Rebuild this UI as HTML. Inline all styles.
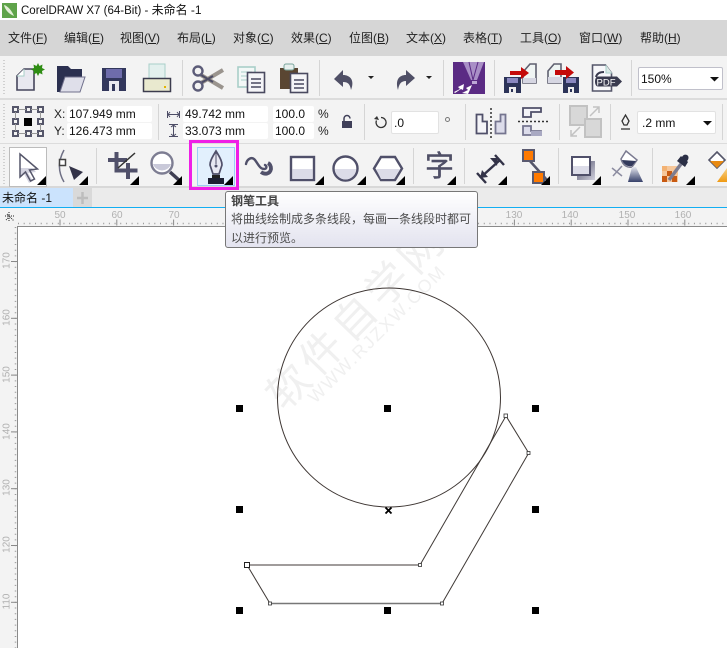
<!DOCTYPE html>
<html lang="zh"><head><meta charset="utf-8"><title>CorelDRAW X7</title>
<style>
html,body{margin:0;padding:0;background:#fff}
#p{position:relative;width:727px;height:648px;overflow:hidden;background:#fff;font-family:"Liberation Sans","Noto Sans CJK SC",sans-serif;font-size:12px;color:#111}
#p div,#p span.a{position:absolute;white-space:nowrap}
.m{top:30px;line-height:16px;font-size:12px;color:#222}
.m u{text-underline-offset:1px}
.b{background:#fff;border-radius:2px;height:16px;line-height:16px;color:#111;font-size:12px;padding-left:2px;box-sizing:border-box}
.l{font-size:12px;line-height:16px;color:#222}
.rh{top:210px;font-size:10px;line-height:11px;color:#b0b0b0;width:24px;text-align:center}
.rv{left:-5px;font-size:10px;line-height:11px;color:#b0b0b0;width:24px;text-align:center;transform:rotate(-90deg)}
svg{position:absolute;left:0;top:0}
</style></head><body><div id="p">

<div style="left:0;top:20px;width:727px;height:36px;background:#d6d6d6"></div>
<div style="left:0;top:56px;width:727px;height:132px;background:#f3f3f3"></div>
<div style="left:0;top:98px;width:727px;height:2px;background:#dcdcdc"></div>
<div style="left:0;top:143px;width:727px;height:1px;background:#dcdcdc"></div>
<div style="left:0;top:186px;width:727px;height:2px;background:#d8d8d8"></div>
<div style="left:0;top:188px;width:727px;height:19px;background:#ebebeb"></div>
<div style="left:0;top:188px;width:73px;height:19px;background:#cbe3fd"></div>
<div style="left:73px;top:188px;width:19px;height:19px;background:#d9d9d9"></div>
<div style="left:0;top:207px;width:727px;height:1px;background:#12aef2"></div>
<div style="left:0;top:208px;width:727px;height:18px;background:#f3f3f3"></div>
<div style="left:0;top:208px;width:17px;height:440px;background:#f3f3f3"></div>
<div style="left:17px;top:226px;width:710px;height:1px;background:#8a8a8a"></div>
<div style="left:17px;top:226px;width:1px;height:422px;background:#8a8a8a"></div>

<!-- combos / input boxes -->
<div class="b" style="left:638px;top:67px;width:85px;height:23px;line-height:23px;border:1px solid #c0c0ca;padding-left:2px">150%</div>
<div class="b" style="left:67px;top:106px;width:85px">107.949 mm</div>
<div class="b" style="left:67px;top:123px;width:85px">126.473 mm</div>
<div class="b" style="left:183px;top:106px;width:85px">49.742 mm</div>
<div class="b" style="left:183px;top:123px;width:85px">33.073 mm</div>
<div class="b" style="left:273px;top:106px;width:41px">100.0</div>
<div class="b" style="left:273px;top:123px;width:41px">100.0</div>
<div class="b" style="left:391px;top:111px;width:48px;height:23px;line-height:23px;border:1px solid #e2e2e2">.0</div>
<div class="b" style="left:637px;top:111px;width:79px;height:23px;line-height:23px;border:1px solid #e2e2e2;padding-left:4px">.2 mm</div>

<!-- canvas art -->
<div style="left:207px;top:292px;font-size:42px;line-height:50px;letter-spacing:5.500px;color:#f0f0f0;width:300px;text-align:center;transform:rotate(-46deg)">软件自学网</div>
<div style="left:227px;top:323px;font-size:18px;line-height:22px;letter-spacing:1.800px;color:#f0f0f0;width:300px;text-align:center;transform:rotate(-45deg)">WWW.RJZXW.COM</div>

<svg width="727" height="648" viewBox="0 0 727 648">
<!-- ruler ticks -->
<line x1="18" y1="223.500" x2="727" y2="223.500" stroke="#9a9a9a" stroke-width="1.500" stroke-dasharray="1 4.680"/>
<line x1="15.500" y1="227" x2="15.500" y2="648" stroke="#9a9a9a" stroke-width="1.500" stroke-dasharray="1 4.680"/>
<line x1="59.500" y1="222.500" x2="727" y2="222.500" stroke="#8a8a8a" stroke-width="6" stroke-dasharray="1 55.800" />
<line x1="11" y1="261.500" x2="17" y2="261.500" stroke="#888"/><line x1="11" y1="318.300" x2="17" y2="318.300" stroke="#888"/><line x1="11" y1="375.100" x2="17" y2="375.100" stroke="#888"/><line x1="11" y1="431.900" x2="17" y2="431.900" stroke="#888"/><line x1="11" y1="488.700" x2="17" y2="488.700" stroke="#888"/><line x1="11" y1="545.500" x2="17" y2="545.500" stroke="#888"/><line x1="11" y1="602.300" x2="17" y2="602.300" stroke="#888"/>
<path d="M5 216h9M9 212v10M7 214l7 7M6 220l3-3" stroke="#222" stroke-width="1" stroke-dasharray="1 1" fill="none"/>
<rect x="0" y="207" width="727" height="1" fill="#12aef2"/>

<!-- drawing -->
<ellipse cx="389" cy="397.500" rx="111.500" ry="109.500" fill="none" stroke="#3e3633" stroke-width="1"/>
<path d="M247 565H420L506 416L528.700 453L442 603.500H270Z" fill="none" stroke="#403a37" stroke-width="1"/>
<path d="M270 603.500H442" stroke="#777" stroke-width="1.500"/>
<rect x="244.500" y="562.500" width="5" height="5" fill="#fff" stroke="#222"/>
<g fill="#fff" stroke="#333" stroke-width=".8"><rect x="418.500" y="563.500" width="3" height="3"/><rect x="268.500" y="602" width="3" height="3"/><rect x="440.500" y="602" width="3" height="3"/><rect x="527" y="451.500" width="3" height="3"/><rect x="504" y="414" width="3.500" height="3.500"/></g>
<g fill="#000"><rect x="236" y="405" width="7" height="7"/><rect x="384" y="405" width="7" height="7"/><rect x="532" y="405" width="7" height="7"/><rect x="236" y="506" width="7" height="7"/><rect x="532" y="506" width="7" height="7"/><rect x="236" y="607" width="7" height="7"/><rect x="384" y="607" width="7" height="7"/><rect x="532" y="607" width="7" height="7"/></g>
<path d="M385.500 507.500l6 6M391.500 507.500l-6 6" stroke="#000" stroke-width="1.800"/>

<!-- app logo -->
<rect x="2" y="3" width="15" height="15" fill="#5fa34a"/><path d="M4 5c4 1 8 6 10 11c-5-2-9-6-10-11z" fill="#e4efd8"/>

<!-- drag handles -->
<g stroke="#c4c4c4" stroke-dasharray="1 2" stroke-width="1.500"><line x1="4" y1="60" x2="4" y2="95"/><line x1="4" y1="104" x2="4" y2="140"/><line x1="4" y1="147" x2="4" y2="184"/></g>
<!-- separators -->
<g stroke="#d5d5d5"><path d="M182.500 60v36M319.500 60v36M443.500 60v36M494.500 60v36M631.500 60v36M158.500 104v36M364.500 104v36M465.500 104v36M559.500 104v36M610.500 104v36M722.500 104v36M96.500 148v36M413.500 148v36M464.500 148v36M558.500 148v36M652.500 148v36"/></g>

<!-- new -->
<path d="M17 76l7-7h10v21H17z" fill="#e8e8f0" stroke="#46465c" stroke-width="1.600"/><path d="M17 76h7v-7" fill="#fff" stroke="#a9cfc9"/>
<path d="M38 63l1.500 3 3-1.500-.5 3.500 3 1.500-3 1.500.5 3.500-3-1.500-1.500 3-1.500-3-3 1.500.5-3.500-3-1.500 3-1.500-.5-3.500 3 1.500z" fill="#2f8d14"/>
<!-- open -->
<path d="M57 92V66h11l3 3h11v8H65l-5 15z" fill="#2b3050"/><path d="M60 92l5-15h20l-5 15z" fill="#dfdfea" stroke="#70708c"/>
<!-- save -->
<rect x="102" y="68" width="24" height="23" fill="#32375c"/><rect x="106" y="69" width="16" height="9" fill="#6e6cab"/><rect x="109" y="81" width="10" height="10" fill="#e8e8f0"/><rect x="112" y="84" width="3" height="7" fill="#32375c"/>
<!-- print -->
<rect x="149" y="64" width="16" height="18" fill="#e3f0ee" stroke="#a9cfc9"/><rect x="143.500" y="78.500" width="27" height="13" fill="#e9e9cf" stroke="#3c3c4e" stroke-width="1.500"/><rect x="164" y="86" width="2" height="2" fill="#e4b400"/>
<!-- scissors -->
<path d="M201 75l22 13M201 83l22-13" stroke="#9a948e" stroke-width="4"/><path d="M201 75l12 7M201 83l12-7" stroke="#4d4d66" stroke-width="2"/><circle cx="198" cy="71" r="4.500" fill="none" stroke="#5c5c78" stroke-width="2.400"/><circle cx="198" cy="86" r="4.500" fill="none" stroke="#5c5c78" stroke-width="2.400"/>
<!-- copy -->
<rect x="238" y="67" width="17" height="20" fill="#f3f8f7" stroke="#a9cfc9" stroke-width="1.600"/><path d="M241 72h11M241 76h6M241 80h6" stroke="#a9cfc9"/><rect x="247.500" y="72.500" width="17" height="20" fill="#f5f5f8" stroke="#4a4a60" stroke-width="1.600"/><path d="M251 79h10M251 83h10M251 87h10" stroke="#4a4a60" stroke-width="1.400"/>
<!-- paste -->
<rect x="280" y="68" width="18" height="21" fill="#5a4632"/><rect x="284" y="64" width="10" height="6" rx="2" fill="#e8f0ee" stroke="#7aa59c"/><rect x="290.500" y="73.500" width="17" height="19" fill="#f5f5f8" stroke="#4a4a60" stroke-width="1.600"/><path d="M294 80h10M294 84h10M294 88h10" stroke="#4a4a60" stroke-width="1.400"/>
<!-- undo/redo -->
<path d="M343 70l-9 9 9 8v-5c5 0 7 2 8 8 4-10-1-15-8-15z" fill="#4f4f66"/>
<path d="M406 70l9 8-9 8v-5c-5 0-7 3-8 9-3-10 1-15 8-15z" fill="#4f4f66"/>
<path d="M368 76h6l-3 3zM426 76h6l-3 3z" fill="#222"/>
<!-- connect -->
<rect x="453" y="62" width="32" height="32" fill="#5b2b84"/><path d="M463 62h21l-7 18h-6z" fill="#a98fc6"/><path d="M469 62l4 18M478 62l-5 18" stroke="#5b2b84"/><rect x="472" y="81" width="5" height="3" fill="#bda7d6"/><path d="M454 92l6-3-2-2 6-3-1 6-2-1-6 4zM472 85l-6 3 2 2-6 3 6 1 1-2z" fill="#fff"/>
<!-- import -->
<path d="M523 72l7-8h6v19h-13z" fill="#f0f5f4" stroke="#5f6070" stroke-width="1.600"/><path d="M523 78h13v5h-13z" fill="#d6d6e2"/><rect x="504" y="77" width="17" height="16" fill="#2c3358"/><rect x="507" y="78" width="11" height="5" fill="#8a88c0"/><rect x="509" y="87" width="7" height="6" fill="#eee"/><rect x="511" y="89" width="2" height="3" fill="#2c3358"/><path d="M510 71h11v-4l8 6-8 6v-4h-11z" fill="#c40a0a"/>
<!-- export -->
<path d="M548 71l6-7h7v19h-13z" fill="#eef4f3" stroke="#5f6070" stroke-width="1.600"/><path d="M548 77h14v6h-14z" fill="#d6d6e2"/><rect x="563" y="77" width="16" height="16" fill="#2c3358"/><rect x="566" y="78" width="10" height="5" fill="#8a88c0"/><rect x="568" y="87" width="6" height="6" fill="#eee"/><rect x="570" y="89" width="2" height="3" fill="#2c3358"/><path d="M555 70h11v-4l8 6.500-8 6.500v-4h-11z" fill="#c40a0a"/>
<!-- pdf -->
<path d="M592.500 65h13l6 8v18h-19z" fill="#f7f7fa" stroke="#55566a" stroke-width="1.600"/><path d="M606 65v8h6" fill="#dbe9e6" stroke="#a9cfc9"/><path d="M598 76.500h19l5 5-5 5h-19c-4 0-4-10 0-10z" fill="#3a3b4f"/><path d="M596 77c1-4 4-5 8-5" fill="none" stroke="#3a3b4f" stroke-width="2"/>
<text x="596.500" y="85.500" font-family="Liberation Sans" font-size="9.500" fill="#fff">PDF</text>
<path d="M710 77h9l-4.500 4.500z" fill="#111"/>

<!-- property bar -->
<g fill="none" stroke="#55566a" stroke-width="2"><rect x="13" y="107" width="5" height="5"/><rect x="26" y="107" width="5" height="5"/><rect x="38" y="107" width="5" height="5"/><rect x="13" y="119" width="5" height="5"/><rect x="38" y="119" width="5" height="5"/><rect x="13" y="131" width="5" height="5"/><rect x="26" y="131" width="5" height="5"/><rect x="38" y="131" width="5" height="5"/></g><rect x="24" y="118" width="8" height="8" fill="#000"/>
<path d="M18 109.500h8M31 109.500h7M15.500 112v7M40.500 112v7M15.500 124v7M40.500 124v7M18 133.500h8M31 133.500h7" stroke="#999"/>
<path d="M168 114.500h11M170 112l-2 2.500 2 2.500M177 112l2 2.500-2 2.500M167.500 111v7M179.500 111v7" stroke="#4d4d66" fill="none"/>
<path d="M173.500 125v11M171 127l2.500-2 2.500 2M171 134l2.500 2 2.500-2M169 124.500h9M169 136.500h9" stroke="#4d4d66" fill="none"/>
<rect x="342" y="121" width="10" height="7" fill="#3f3f58"/><path d="M344 121v-2.500a3 3 0 0 1 6 0" stroke="#3f3f58" stroke-width="1.500" fill="none"/>
<path d="M381 117.500a5 5 0 1 1-4.500 3" stroke="#333" stroke-width="1.300" fill="none"/><path d="M374 119l3-3 2 4z" fill="#333"/>
<circle cx="447.500" cy="119.500" r="2" fill="none" stroke="#777"/>
<!-- mirror h -->
<path d="M476.500 114.500h6v7h4.500v12h-10.500z" fill="#f4f4f8" stroke="#50506a" stroke-width="1.800"/><path d="M505.500 114.500h-5v7h-5v12h10z" fill="#dcdcea" stroke="#75758f" stroke-width="1.800"/><line x1="491" y1="108" x2="491" y2="138" stroke="#333" stroke-dasharray="2 2" stroke-width="1.500"/>
<!-- mirror v -->
<path d="M523 108h18v4h-10v5h-8z" fill="#f4f4f8" stroke="#50506a" stroke-width="1.800"/><path d="M523 126h8v5h10v4h-18z" fill="#dcdcea" stroke="#75758f" stroke-width="1.800"/><rect x="531" y="131" width="11" height="5" fill="#a9a9c2"/><line x1="518" y1="121.500" x2="548" y2="121.500" stroke="#333" stroke-dasharray="2 2" stroke-width="1.500"/>
<!-- grey transform -->
<rect x="570" y="106" width="17" height="19" fill="#d8d8d8" stroke="#c2c2c2" stroke-width="2"/><rect x="585" y="119" width="16" height="18" fill="#d8d8d8" stroke="#c2c2c2" stroke-width="2"/><path d="M590 116l9-9M593 107h6v6M571 136l9-9M571 130v6h6" stroke="#c2c2c2" stroke-width="1.500" fill="none"/>
<path d="M624 125l-2-4 3.500-6 3.500 6-2 4zM621 129h9" stroke="#333" fill="none" stroke-width="1.300"/>
<path d="M703 121h9l-4.500 4.500z" fill="#111"/>

<!-- toolbox -->
<rect x="9.500" y="147.500" width="37" height="39" fill="#fff" stroke="#bcbcbc"/>
<path d="M20 168h12l4 4-8 1 5 8-4 2-5-9-4 4z" fill="#d4d4e0"/>
<path d="M20 154v23l5.500-5 5 9 4-2-5-9 8-1z" fill="none" stroke="#55566a" stroke-width="1.500"/>
<path d="M64 150c-6 11-6 22 0 32" fill="none" stroke="#6f7085" stroke-width="1.500"/><rect x="59.500" y="159.500" width="6" height="6" fill="#fff" stroke="#444" stroke-width="1.500"/><path d="M69 166l14 6-9 8z" fill="#333348"/>
<!-- crop -->
<path d="M108 160h19v0" stroke="#50506a" stroke-width="4" fill="none"/><path d="M116.500 152v18.500h21M128 163v16" stroke="#50506a" stroke-width="4" fill="none"/><path d="M118 168l17-15" stroke="#333" stroke-width="1.500"/>
<!-- zoom -->
<circle cx="162" cy="163" r="10.500" fill="#fff" stroke="#7d7d92" stroke-width="2.400"/><path d="M153 164h18a9.500 9.500 0 0 1-18 0z" fill="#c9c9d9"/><path d="M170 172l10 9" stroke="#3e3e52" stroke-width="3.500"/>
<!-- pen tool highlight -->
<rect x="190.500" y="141.500" width="47" height="47" fill="none" stroke="#ef1fe6" stroke-width="3"/>
<rect x="197.500" y="147.500" width="37" height="38" fill="#e2f0fd" stroke="#9ccdf7"/>
<path d="M216 151c5 8 6 11 6 14l-3 9h-6l-3-9c0-3 1-6 6-14z" fill="#e8e8f2" stroke="#50506a" stroke-width="1.700"/><path d="M216 152v12" stroke="#50506a"/><circle cx="216" cy="166" r="1.500" fill="#50506a"/><rect x="212" y="175" width="8" height="3" fill="#222"/><rect x="208" y="178" width="16" height="6" fill="#1d2033"/>
<!-- artistic curve -->
<path d="M246 164c1-5 6-8 9-4s5 9 9 9c3 0 3-3 1-4" fill="none" stroke="#50506a" stroke-width="2.400" stroke-linecap="round"/><path d="M261 172c4 3 9 2 10-3c0-3-1-5-3-6" fill="none" stroke="#50506a" stroke-width="3.800"/>
<!-- rect -->
<rect x="291" y="157" width="23" height="23" fill="#fff" stroke="#50506a" stroke-width="2.400"/><rect x="292.500" y="169" width="20" height="10" fill="#dcdce8"/>
<!-- ellipse -->
<circle cx="345.500" cy="168.500" r="12" fill="#fff" stroke="#50506a" stroke-width="2.400"/><path d="M335 169h21a10.500 10.500 0 0 1-21 0z" fill="#dcdce8"/>
<!-- polygon -->
<path d="M381 157h14l7 11.500-7 11.500h-14l-7-11.500z" fill="#fff" stroke="#50506a" stroke-width="2.400"/><path d="M376 169h24l-6 10h-13z" fill="#dcdce8"/>
<!-- dim -->
<path d="M480 178l20-18" stroke="#333348" stroke-width="2.400"/><path d="M477 173l9 10M495 155l9 10" stroke="#333348" stroke-width="2.400"/><path d="M482 170l-2 8 8-1zM490 158l8 0-1 8z" fill="#333348"/>
<!-- connector -->
<path d="M529 160l18 20" stroke="#55566a" stroke-width="2.500"/><rect x="523" y="150" width="11" height="11" fill="#ff7a00" stroke="#5a5a70" stroke-width="2"/><rect x="533" y="172" width="11" height="11" fill="#ff7a00" stroke="#5a5a70" stroke-width="2"/>
<!-- shadow -->
<defs><linearGradient id="g1" x1="0" y1="0" x2="1" y2="1"><stop offset="0" stop-color="#50506a"/><stop offset="1" stop-color="#d0d0dc"/></linearGradient><linearGradient id="g2" x1="0" y1="0" x2="0" y2="1"><stop offset="0" stop-color="#e4e6ee"/><stop offset="1" stop-color="#36406a"/></linearGradient><linearGradient id="g3" x1="0" y1="0" x2="0" y2="1"><stop offset="0" stop-color="#f7d28a"/><stop offset="1" stop-color="#f09a12"/></linearGradient></defs>
<rect x="577" y="161" width="18" height="19" fill="url(#g1)"/><rect x="572" y="157" width="18" height="18" fill="#fff" stroke="#50506a" stroke-width="2"/><rect x="573" y="166" width="16" height="8" fill="#dcdce8"/>
<!-- transparency -->
<path d="M626 151l11 9-5 7c-4 1-9-1-11-8z" fill="#fff" stroke="#7a7a90" stroke-width="1.500"/><path d="M622 160l14 1-4 5c-4 1-8-1-10-6z" fill="#333a5c"/><path d="M622 166l-9 10M612 168l10 8" stroke="#8c8ca0" stroke-width="1.500"/><path d="M632 167h4l7 15h-15z" fill="url(#g2)"/>
<!-- eyedropper / fill -->
<rect x="662" y="166" width="16" height="16" fill="#f6c79a"/><rect x="662" y="166" width="5" height="5" fill="#f3b273"/><rect x="667" y="171" width="5" height="5" fill="#c85a12"/><rect x="662" y="176" width="5" height="6" fill="#c85a12"/><rect x="672" y="176" width="5" height="6" fill="#c85a12"/>
<path d="M669 180l12-16" stroke="#7c7c90" stroke-width="3.400"/><path d="M677 161l8 6 3-5-1-1c2-2 2-5 0-6s-4 0-5 2l-1-1z" fill="#2b2f46"/>
<path d="M717 152l8 8-8 8-8-8z" fill="#fff" stroke="#55566a" stroke-width="1.600"/><path d="M710 161h14l-7 7z" fill="#e88a12"/><path d="M727 168v14h-10z" fill="url(#g3)"/>
<!-- corner arrows -->
<g fill="#000"><path d="M46 176v9h-9zM88 176v9h-9zM139 176v9h-9zM182 176v9h-9zM233 176v9h-9zM324 176v9h-9zM366 176v9h-9zM405 176v9h-9zM456 176v9h-9zM507 176v9h-9zM550 176v9h-9zM601 176v9h-9zM695 176v9h-9z"/></g>
<!-- plus -->
<path d="M82.500 192v12M77 198h11" stroke="#bdbdbd" stroke-width="2.500"/>
</svg>

<!-- title -->
<div style="left:21px;top:2px;font-size:11.500px;line-height:16px;color:#111">CorelDRAW X7 (64-Bit) - <span style="font-size:12px">未命名 -1</span></div>

<!-- menu -->
<div class="m" style="left:8px">文件(<u>F</u>)</div>
<div class="m" style="left:64px">编辑(<u>E</u>)</div>
<div class="m" style="left:120px">视图(<u>V</u>)</div>
<div class="m" style="left:177px">布局(<u>L</u>)</div>
<div class="m" style="left:233px">对象(<u>C</u>)</div>
<div class="m" style="left:291px">效果(<u>C</u>)</div>
<div class="m" style="left:349px">位图(<u>B</u>)</div>
<div class="m" style="left:406px">文本(<u>X</u>)</div>
<div class="m" style="left:463px">表格(<u>T</u>)</div>
<div class="m" style="left:520px">工具(<u>O</u>)</div>
<div class="m" style="left:579px">窗口(<u>W</u>)</div>
<div class="m" style="left:640px">帮助(<u>H</u>)</div>

<!-- prop labels -->
<div class="l" style="left:54px;top:106px">X:</div>
<div class="l" style="left:54px;top:123px">Y:</div>
<div class="l" style="left:318px;top:106px">%</div>
<div class="l" style="left:318px;top:123px">%</div>

<!-- 字 -->
<div style="left:425px;top:150px;font-size:29px;line-height:34px;color:#4f4f66;-webkit-text-stroke:.4px #4f4f66">字</div>

<!-- tab -->
<div style="left:2px;top:190px;font-size:12px;line-height:16px;color:#111">未命名 -1</div>

<!-- ruler labels -->
<div class="rh" style="left:48px">50</div>
<div class="rh" style="left:105px">60</div>
<div class="rh" style="left:162px">70</div>
<div class="rh" style="left:502px">130</div>
<div class="rh" style="left:558px">140</div>
<div class="rh" style="left:615px">150</div>
<div class="rh" style="left:671px">160</div>
<div class="rv" style="top:255px">170</div>
<div class="rv" style="top:312px">160</div>
<div class="rv" style="top:369px">150</div>
<div class="rv" style="top:426px">140</div>
<div class="rv" style="top:482px">130</div>
<div class="rv" style="top:539px">120</div>
<div class="rv" style="top:596px">110</div>

<!-- tooltip -->
<div style="left:225px;top:191px;width:253px;height:57px;box-sizing:border-box;border:1px solid #777;border-radius:3px;background:linear-gradient(#ffffff,#e3e3ef)"></div>
<div style="left:231px;top:193px;font-size:12px;line-height:16px;font-weight:bold;color:#444">钢笔工具</div>
<div style="left:231px;top:211px;font-size:12px;line-height:16px;color:#4d4d4d">将曲线绘制成多条线段，每画一条线段时都可</div>
<div style="left:231px;top:230px;font-size:12px;line-height:16px;color:#4d4d4d">以进行预览。</div>
</div></body></html>
